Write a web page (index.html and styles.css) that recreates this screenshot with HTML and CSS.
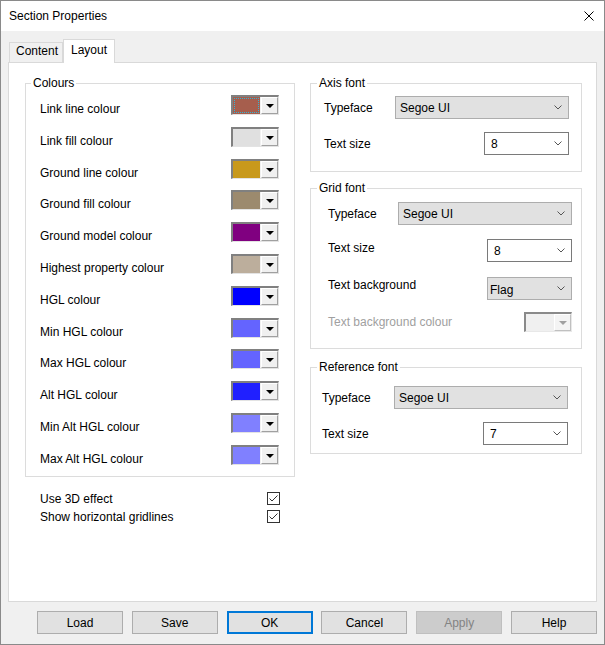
FILE: index.html
```html
<!DOCTYPE html>
<html lang="en">
<head>
<meta charset="utf-8">
<title>Section Properties</title>
<link rel="stylesheet" href="styles.css">
</head>
<body>
<div class="window">
  <div class="titlebar">
    <span class="title">Section Properties</span>
    <svg class="close" width="10" height="10" viewBox="0 0 10 10"><path d="M0.5 0.5 L9.5 9.5 M9.5 0.5 L0.5 9.5" stroke="#000" stroke-width="1" fill="none"/></svg>
  </div>
  <div class="content">
    <div class="tabs">
      <div class="tab">Content</div>
      <div class="tab active">Layout</div>
    </div>
    <div class="panel">
      <div class="cols">
        <div class="left">
          <fieldset class="group">
            <legend>Colours</legend>
            <div class="gbody colours">
              <div class="crow"><span class="lbl">Link line colour</span><span class="swatch"><span class="sw-col c1 focus"></span><span class="sw-btn"><i class="tri"></i></span></span></div>
              <div class="crow"><span class="lbl">Link fill colour</span><span class="swatch"><span class="sw-col c2"></span><span class="sw-btn"><i class="tri"></i></span></span></div>
              <div class="crow"><span class="lbl">Ground line colour</span><span class="swatch"><span class="sw-col c3"></span><span class="sw-btn"><i class="tri"></i></span></span></div>
              <div class="crow"><span class="lbl">Ground fill colour</span><span class="swatch"><span class="sw-col c4"></span><span class="sw-btn"><i class="tri"></i></span></span></div>
              <div class="crow"><span class="lbl">Ground model colour</span><span class="swatch"><span class="sw-col c5"></span><span class="sw-btn"><i class="tri"></i></span></span></div>
              <div class="crow"><span class="lbl">Highest property colour</span><span class="swatch"><span class="sw-col c6"></span><span class="sw-btn"><i class="tri"></i></span></span></div>
              <div class="crow"><span class="lbl">HGL colour</span><span class="swatch"><span class="sw-col c7"></span><span class="sw-btn"><i class="tri"></i></span></span></div>
              <div class="crow"><span class="lbl">Min HGL colour</span><span class="swatch"><span class="sw-col c8"></span><span class="sw-btn"><i class="tri"></i></span></span></div>
              <div class="crow"><span class="lbl">Max HGL colour</span><span class="swatch"><span class="sw-col c8"></span><span class="sw-btn"><i class="tri"></i></span></span></div>
              <div class="crow"><span class="lbl">Alt HGL colour</span><span class="swatch"><span class="sw-col c9"></span><span class="sw-btn"><i class="tri"></i></span></span></div>
              <div class="crow"><span class="lbl">Min Alt HGL colour</span><span class="swatch"><span class="sw-col c10"></span><span class="sw-btn"><i class="tri"></i></span></span></div>
              <div class="crow"><span class="lbl">Max Alt HGL colour</span><span class="swatch"><span class="sw-col c10"></span><span class="sw-btn"><i class="tri"></i></span></span></div>
            </div>
          </fieldset>
          <div class="checks">
            <div class="chk"><span>Use 3D effect</span><span class="box"><svg width="11" height="11" viewBox="0 0 11 11"><polyline points="1.5,5.5 4,8 9.5,2.5" fill="none" stroke="#333" stroke-width="1"/></svg></span></div>
            <div class="chk"><span>Show horizontal gridlines</span><span class="box"><svg width="11" height="11" viewBox="0 0 11 11"><polyline points="1.5,5.5 4,8 9.5,2.5" fill="none" stroke="#333" stroke-width="1"/></svg></span></div>
          </div>
        </div>
        <div class="right">
          <fieldset class="group g-axis">
            <legend>Axis font</legend>
            <div class="gbody">
              <div class="frow"><span>Typeface</span><span class="combo w-face"><span>Segoe UI</span><svg class="chev" width="8" height="5" viewBox="0 0 8 5"><polyline points="0.5,0.5 4,4 7.5,0.5" fill="none" stroke="#555" stroke-width="1"/></svg></span></div>
              <div class="frow gap13"><span>Text size</span><span class="combo edit w-size"><span>8</span><svg class="chev" width="8" height="5" viewBox="0 0 8 5"><polyline points="0.5,0.5 4,4 7.5,0.5" fill="none" stroke="#555" stroke-width="1"/></svg></span></div>
            </div>
          </fieldset>
          <fieldset class="group g-grid">
            <legend>Grid font</legend>
            <div class="gbody">
              <div class="frow"><span>Typeface</span><span class="combo w-face"><span>Segoe UI</span><svg class="chev" width="8" height="5" viewBox="0 0 8 5"><polyline points="0.5,0.5 4,4 7.5,0.5" fill="none" stroke="#555" stroke-width="1"/></svg></span></div>
              <div class="frow gap14"><span class="up5">Text size</span><span class="combo edit w-size"><span>8</span><svg class="chev" width="8" height="5" viewBox="0 0 8 5"><polyline points="0.5,0.5 4,4 7.5,0.5" fill="none" stroke="#555" stroke-width="1"/></svg></span></div>
              <div class="frow gap15"><span class="up8">Text background</span><span class="combo w-size flag"><span class="flagtxt">Flag</span><svg class="chev" width="8" height="5" viewBox="0 0 8 5"><polyline points="0.5,0.5 4,4 7.5,0.5" fill="none" stroke="#555" stroke-width="1"/></svg></span></div>
              <div class="frow gap12 short"><span class="disabled">Text background colour</span><span class="swatch off"><span class="sw-col"></span><span class="sw-btn"><i class="tri"></i></span></span></div>
            </div>
          </fieldset>
          <fieldset class="group g-ref">
            <legend>Reference font</legend>
            <div class="gbody">
              <div class="frow"><span>Typeface</span><span class="combo w-face"><span>Segoe UI</span><svg class="chev" width="8" height="5" viewBox="0 0 8 5"><polyline points="0.5,0.5 4,4 7.5,0.5" fill="none" stroke="#555" stroke-width="1"/></svg></span></div>
              <div class="frow gap13"><span>Text size</span><span class="combo edit w-size"><span>7</span><svg class="chev" width="8" height="5" viewBox="0 0 8 5"><polyline points="0.5,0.5 4,4 7.5,0.5" fill="none" stroke="#555" stroke-width="1"/></svg></span></div>
            </div>
          </fieldset>
        </div>
      </div>
    </div>
    <div class="buttons">
      <button class="btn">Load</button>
      <button class="btn">Save</button>
      <button class="btn default">OK</button>
      <button class="btn">Cancel</button>
      <button class="btn off">Apply</button>
      <button class="btn">Help</button>
    </div>
  </div>
</div>
</body>
</html>
```
FILE: styles.css
```css
html, body {
  margin: 0;
  padding: 0;
  background: #f0f0f0;
}
body {
  font: 12px "Liberation Sans", Arial, sans-serif;
  color: #000;
}
.window {
  width: 605px;
  height: 645px;
  box-sizing: border-box;
  border: 1px solid #8a8a8a;
  background: #f0f0f0;
  display: flex;
  flex-direction: column;
}
.titlebar {
  height: 30px;
  flex: none;
  background: #fff;
  display: flex;
  align-items: center;
  justify-content: space-between;
  padding: 0 10px 0 8px;
}
.title {
  line-height: 16px;
}
.close {
  display: block;
}
.content {
  padding: 8px 7px 0;
}
.tabs {
  display: flex;
  align-items: flex-end;
  height: 23px;
  padding-left: 1px;
}
.tab {
  box-sizing: border-box;
  height: 20px;
  width: 54px;
  border: 1px solid #d9d9d9;
  border-bottom: none;
  background: #f0f0f0;
  padding-left: 6px;
  line-height: 17px;
}
.tab.active {
  position: relative;
  z-index: 1;
  width: 52px;
  height: 24px;
  margin-bottom: -1px;
  background: #fff;
  padding-left: 7px;
  line-height: 20px;
}
.panel {
  height: 540px;
  box-sizing: border-box;
  border: 1px solid #d9d9d9;
  background: #fff;
  padding: 13px 0 0 16px;
}
.cols {
  display: flex;
  gap: 15px;
}
.left {
  width: 270px;
}
.right {
  width: 272px;
}
.group {
  margin: 0;
  padding: 0;
  min-width: 0;
  border: 1px solid #dcdcdc;
}
.group legend {
  margin-left: 5px;
  padding: 0 2px;
  line-height: 15px;
}
.right .group legend {
  margin-left: 6px;
}
.colours {
  padding: 2px 15px 1px 14px;
}
.crow {
  height: 31.8px;
  display: flex;
  justify-content: space-between;
  align-items: flex-start;
}
.crow .lbl {
  margin-top: 8px;
  line-height: 16px;
}
.crow .swatch {
  margin-top: 2px;
}
.swatch {
  display: flex;
  width: 48px;
  height: 20px;
  box-sizing: border-box;
  border-style: solid;
  border-width: 2px 1px 1px 2px;
  border-color: #808080 #e3e3e3 #e3e3e3 #808080;
  background: #f0f0f0;
}
.sw-col {
  flex: 1;
  margin-right: 1px;
}
.sw-col.focus {
  outline: 1px dotted #33b5d6;
  outline-offset: -2px;
}
.sw-btn {
  width: 17px;
  box-sizing: border-box;
  border-style: solid;
  border-width: 1px;
  border-color: #fff #a0a0a0 #a0a0a0 #fff;
  background: #f0f0f0;
  display: flex;
  align-items: center;
  justify-content: center;
}
.tri {
  width: 0;
  height: 0;
  border-left: 4px solid transparent;
  border-right: 4px solid transparent;
  border-top: 4px solid #000;
  margin-top: 1px;
}
.c1 { background: #a65e4d; }
.c2 { background: #e0e0e0; }
.c3 { background: #c8991c; }
.c4 { background: #9c8a6e; }
.c5 { background: #800080; }
.c6 { background: #bcae9c; }
.c7 { background: #0000ff; }
.c8 { background: #6464ff; }
.c9 { background: #2020ff; }
.c10 { background: #8080ff; }
.swatch.off {
  border-color: #8a8a8a #e8e8e8 #e8e8e8 #8a8a8a;
}
.swatch.off .sw-col {
  background: #f0f0f0;
}
.swatch.off .sw-btn {
  background: #f4f4f4;
  border-color: #fff #c0c0c0 #c0c0c0 #fff;
}
.swatch.off .tri {
  border-top-color: #a0a0a0;
}
.checks {
  margin-top: 13px;
  padding: 0 15px;
}
.chk {
  display: flex;
  justify-content: space-between;
  align-items: center;
  height: 18px;
}
.box {
  width: 13px;
  height: 13px;
  box-sizing: border-box;
  border: 1px solid #333;
  background: #fff;
  display: flex;
}
.box svg {
  display: block;
}
.frow {
  display: flex;
  align-items: center;
  justify-content: space-between;
  height: 23px;
}
.frow.short {
  height: 20px;
}
.gap12 { margin-top: 12px; }
.gap13 { margin-top: 13px; }
.gap14 { margin-top: 14px; }
.gap15 { margin-top: 15px; }
.up5 { margin-top: -5px; }
.up8 { margin-top: -8px; }
.g-axis .gbody {
  padding: 5px 12px 16px 13px;
}
.g-grid {
  margin-top: 9px;
}
.g-grid .gbody {
  padding: 6px 9px 16px 17px;
}
.g-ref {
  margin-top: 11px;
}
.g-ref .gbody {
  padding: 11px 13px 8px 11px;
}
.combo {
  display: flex;
  align-items: center;
  justify-content: space-between;
  height: 23px;
  box-sizing: border-box;
  border: 1px solid #adadad;
  background: #e1e1e1;
  padding: 0 6px 0 4px;
}
.combo.edit {
  background: #fff;
  border-color: #7a7a7a;
  padding-left: 6px;
}
.combo.flag {
  padding-left: 2px;
}
.flagtxt {
  margin-top: 2px;
}
.chev {
  display: block;
}
.w-face {
  width: 174px;
}
.w-size {
  width: 85px;
}
.disabled {
  color: #a0a0a0;
}
.buttons {
  display: flex;
  gap: 8.8px;
  margin-top: 9px;
  padding-left: 29px;
}
.btn {
  width: 86px;
  height: 23px;
  box-sizing: border-box;
  border: 1px solid #adadad;
  background: #e1e1e1;
  font: 12px "Liberation Sans", Arial, sans-serif;
  color: #000;
  padding: 0;
  margin: 0;
}
.btn.default {
  border: 2px solid #0078d7;
}
.btn.off {
  background: #cccccc;
  border-color: #bfbfbf;
  color: #838383;
}
```
